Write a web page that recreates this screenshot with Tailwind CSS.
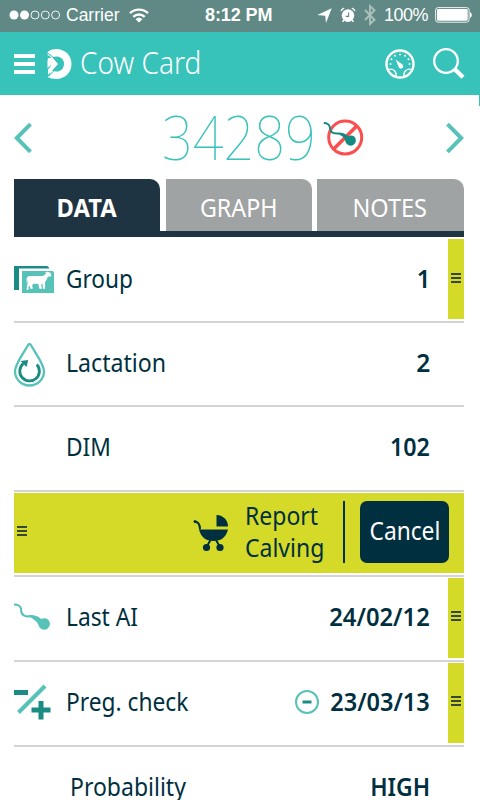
<!DOCTYPE html>
<html lang="en">
<head>
<meta charset="utf-8">
<title>Cow Card</title>
<script src="https://cdn.jsdelivr.net/npm/@tailwindcss/browser@4"></script>
</head>
<body class="w-[480px] h-[800px] overflow-hidden bg-white font-['Noto_Sans','Open_Sans',sans-serif] text-[#00303f]">
<div class="relative flex h-[800px] w-[480px] flex-col overflow-hidden">
  <!-- status bar -->
  <div class="flex h-8 shrink-0 items-center bg-[#608985] pb-[2px] font-['Liberation_Sans',Arial,sans-serif] text-white">
    <svg class="ml-[9px] h-[10px] w-[52px]" viewBox="0 0 52 10"><g fill="#fff"><circle cx="5" cy="5" r="4.5"/><circle cx="15.5" cy="5" r="4.5"/></g><g fill="none" stroke="#fff" stroke-width=".9"><circle cx="26" cy="5" r="4"/><circle cx="36.3" cy="5" r="4"/><circle cx="46.6" cy="5" r="4"/></g></svg>
    <span class="ml-[5px] w-[63px] whitespace-nowrap text-[17.5px] leading-8">Carrier</span>
    <svg class="h-[15px] w-[20px]" viewBox="0 0 20 15"><g fill="none" stroke="#fff" stroke-width="2.4"><path d="M1 5.2a13 13 0 0 1 18 0"/><path d="M4.3 8.8a8.3 8.3 0 0 1 11.4 0"/></g><path d="M6.6 11.2a5 5 0 0 1 6.8 0L10 14.6z" fill="#fff"/></svg>
    <span class="ml-[56px] w-[112px] whitespace-nowrap text-[18px] font-bold leading-8 tracking-[-0.1px]">8:12 PM</span>
    <svg class="h-[15px] w-[15px]" viewBox="0 0 15 15"><path d="M14.7.3 9 15 8.2 7.700 .3 7z" fill="#fff"/></svg>
    <svg class="ml-[8px] h-[16px] w-[16px]" viewBox="0 0 16 16"><circle cx="8" cy="8.600" r="6.300" fill="#fff"/><path d="M8.600 5.600v3.800H5.600" fill="none" stroke="#608985" stroke-width="1.100"/><path d="M1 4A5 5 0 0 1 4.200 1.200M15 4a5 5 0 0 0-3.200-2.800" fill="none" stroke="#fff" stroke-width="1.400"/><path d="m3.800 13-1.200 1.800M12.200 13l1.200 1.800" stroke="#fff" stroke-width="1.400"/></svg>
    <svg class="ml-[8px] h-[22px] w-[12px]" viewBox="0 0 12 22"><path d="M1 6l9.500 9.800L6 20V2l4.500 4.200L1 16" fill="none" stroke="#a9c0be" stroke-width="1.900"/></svg>
    <span class="ml-[8px] w-[51px] whitespace-nowrap text-[18px] leading-8 tracking-[-0.5px]">100%</span>
    <svg class="h-[16px] w-[37px]" viewBox="0 0 37 16"><rect x=".6" y=".6" width="33.5" height="14.6" rx="2.5" fill="none" stroke="#fff" stroke-width=".9"/><rect x="2" y="2" width="30.700" height="11.800" rx="1.200" fill="#fff"/><path d="M35 5v6q1.800-1 1.800-3t-1.800-3z" fill="#fff"/></svg>
  </div>
  <!-- app header -->
  <div class="flex h-[63px] shrink-0 items-center bg-[#37c2ba] text-white">
    <div class="ml-[14px] flex w-[21px] flex-col gap-[4px]"><i class="h-[4px] bg-white"></i><i class="h-[4px] bg-white"></i><i class="h-[4px] bg-white"></i></div>
    <svg class="ml-[12px] h-[30px] w-[25px]" viewBox="0 0 25 30"><path d="M9 0C18 0 24.5 6.500 24.500 15S18 30 9 30Q4 30 .5 28V3Q4 0 9 0z" fill="#fff"/><path d="M5 8.500Q9 6.800 12 7.800 17 9.800 17 15T12 22.200Q9 23.200 5 21.500L11 15z" fill="#37c2ba"/><path d="M0 3.700 8 9.500M.2 28 8.500 20.500" stroke="#37c2ba" stroke-width="1"/><path d="M0 5.500 4.500 8.500 0 11zM0 19.500 4 16 3 26.500 0 27.500z" fill="#37c2ba"/><path d="M.5 9.500 5.500 8.500 10.500 15 1 26V20.500L5.500 15z" fill="#fff"/></svg>
    <span class="ml-[8px] w-[304px] origin-left scale-x-[.92] whitespace-nowrap pb-[3px] text-[30.5px] font-light leading-[60px]">Cow Card</span>
    <svg class="ml-[1px] h-[30px] w-[30px]" viewBox="0 0 30 30"><g fill="none" stroke="#fff"><circle cx="15" cy="15" r="13.500" stroke-width="2.400"/><path d="M4 20.500a5.500 5.500 0 0 1 7 6.500M26 20.500a5.500 5.500 0 0 0-7 6.500" stroke-width="1.300"/></g><path d="M10.500 10.500 17.100 15.300A2.300 2.300 0 1 1 13.600 17.400z" fill="#fff"/><g fill="#fff"><circle cx="5.500" cy="15" r="1"/><circle cx="6.500" cy="10.200" r="1"/><circle cx="10" cy="6.700" r="1"/><circle cx="15" cy="5.400" r="1"/><circle cx="20" cy="6.700" r="1"/><circle cx="23.500" cy="10.200" r="1"/><circle cx="24.500" cy="15" r="1"/></g></svg>
    <svg class="ml-[18px] h-[31px] w-[32px]" viewBox="0 0 32 31"><circle cx="13" cy="13" r="11.800" fill="none" stroke="#fff" stroke-width="2.300"/><path d="m21 20.500 9 8.800" stroke="#fff" stroke-width="4.400"/></svg>
  </div>
  <div class="absolute left-[479px] top-[95px] h-[11px] w-px bg-[#37c2ba]"></div>
  <!-- animal number -->
  <div class="flex h-[84px] shrink-0 items-center px-[14px]">
    <svg class="mt-[2px] h-[30px] w-[18px]" viewBox="0 0 18 30"><path d="M16.500 1.200 2.800 15 16.500 28.800" fill="none" stroke="#56c2b8" stroke-width="4"/></svg>
    <span class="ml-[130px] w-[161px] origin-left scale-x-[.885] whitespace-nowrap text-[61px] font-thin leading-[84px] text-[#37c2ba]">34289</span>
    <svg class="mt-[2px] h-[38px] w-[42px]" viewBox="0 0 42 38"><g fill="none" stroke="#fb4f4f" stroke-width="3"><circle cx="22.200" cy="18.500" r="16.500"/><path d="M33.700 7 10.700 30" stroke-width="3.600"/></g><path d="M.8 4q5 0 6 4 0 6.500 7 6.500 7-.5 11 3.500" fill="none" stroke="#148a82" stroke-width="1.900"/><path d="M14 14q7-.5 10.500 3.300 4-1.500 6.500 0a5.300 5.300 0 1 1-8.500 5.500q-.5-4.500-5-6.500z" fill="#148a82"/></svg>
    <svg class="ml-[81px] mt-[2px] h-[30px] w-[18px]" viewBox="0 0 18 30"><path d="M1.500 1.200 15.200 15 1.500 28.800" fill="none" stroke="#56c2b8" stroke-width="4"/></svg>
  </div>
  <!-- tabs -->
  <div class="ml-[14px] flex h-[58px] w-[450px] shrink-0 gap-[6px] border-b-[6px] border-[#1f3442] text-[25px] leading-[57px] text-white">
    <div class="flex w-[146px] justify-center rounded-tr-[10px] bg-[#1f3442] pr-px"><span class="scale-x-[.95] font-bold">DATA</span></div>
    <div class="flex w-[146px] justify-center rounded-tr-[10px] bg-[#9fa3a3]"><span class="scale-x-[.93]">GRAPH</span></div>
    <div class="-ml-px flex w-[147px] justify-center rounded-tr-[10px] bg-[#9fa3a3] pr-px"><span class="scale-x-[.94]">NOTES</span></div>
  </div>
  <!-- rows -->
  <div class="ml-[14px] flex w-[450px] flex-col text-[25px]">
    <div class="flex h-[86px] items-center border-b-2 border-[#d3d5d5]">
      <svg class="h-[30px] w-[52px]" viewBox="0 0 52 30"><path d="M0 2h32.500q2.500 0 2.500 2.500H5V26H0z" fill="#1a8c84"/><path d="M8 7h30q2 0 2 2v20H8z" fill="#56c2b8"/><path d="M12.500 15q.5-3 3.500-3h12q2 0 4-2.600l-1-.8 2-.3.5-.8 1.500.9h1.300l1.100 3-.7 1.200h-2.400q-1.200 1.300-1.800 3.500l-1.400 2v6.600h-2.200l-.5-5.500-1.300 1.500 1 4h-2.700l-1.200-5h-4.700l-1.300 1.500.6 3.500h-2.300L15.500 21.500l-1 1.200v3h-2l1-6.500.3-4-1 4z" fill="#fff"/></svg>
      <span class="w-[200px] origin-left scale-x-[.905] whitespace-nowrap">Group</span>
      <span class="ml-auto mr-[18px] origin-right scale-x-[.95] font-semibold">1</span>
      <div class="flex h-[80px] w-[16px] flex-col items-center justify-center gap-[2px] bg-[#d5da28] pb-[3px]"><i class="h-[2px] w-[10px] bg-[#36483a]"></i><i class="h-[2px] w-[10px] bg-[#36483a]"></i><i class="h-[2px] w-[10px] bg-[#36483a]"></i></div>
    </div>
    <div class="flex h-[84px] items-center border-b-2 border-[#d3d5d5] pb-[2px]">
      <svg class="mt-[2px] h-[45px] w-[52px]" viewBox="0 0 52 45"><path d="M15.500 2Q16.500 2 17.500 4C22 12 30 22 30 29.500A14.500 14 0 0 1 1 29.500C1 22 9 12 13.500 4Q14.500 2 15.500 2z" fill="none" stroke="#56c2b8" stroke-width="2.300"/><path d="M22.800 22.500A9.800 9.800 0 1 1 9.300 21.600" fill="none" stroke="#1a8c84" stroke-width="2.800"/><path d="M6.500 19 14.200 18 12.500 25z" fill="#1a8c84"/></svg>
      <span class="w-[200px] origin-left scale-x-[.925] whitespace-nowrap">Lactation</span>
      <span class="ml-auto mr-[34px] origin-right scale-x-[.98] font-semibold">2</span>
    </div>
    <div class="flex h-[85px] items-center border-b-2 border-[#d3d5d5] pb-[3px]">
      <span class="ml-[52px] w-[200px] origin-left scale-x-[.91] whitespace-nowrap">DIM</span>
      <span class="ml-auto mr-[34px] origin-right scale-x-[.93] font-semibold">102</span>
    </div>
    <div class="flex h-[85px] items-center border-b-2 border-[#d3d5d5]">
      <div class="-mt-px flex h-[80px] w-full items-center bg-[#d5da28] pb-[3px]">
        <div class="mb-px ml-[3px] flex w-[10px] flex-col gap-[2px]"><i class="h-[2px] bg-[#36483a]"></i><i class="h-[2px] bg-[#36483a]"></i><i class="h-[2px] bg-[#36483a]"></i></div>
        <svg class="ml-[166px] mt-[2px] h-[38px] w-[36px]" viewBox="0 0 36 38"><g fill="#00303f"><path d="M23.500 1A11.500 11.500 0 0 1 35 12.500H23.500zM6 15.500H35Q32 27 20.500 27 9 27 6 15.500z"/><circle cx="13.500" cy="33.500" r="3.600"/><circle cx="27" cy="33.500" r="3.600"/></g><path d="M1 7.500q6 0 6 8M17.500 26l-4 7M23 26l4 7" fill="none" stroke="#00303f" stroke-width="2"/><circle cx="2" cy="7.600" r="1.400" fill="#00303f"/></svg>
        <span class="ml-[16px] w-[98px] origin-left scale-x-[.92] whitespace-nowrap pb-px leading-[32px]">Report<br>Calving</span>
        <div class="h-[62px] w-[2px] bg-[#00303f]"></div>
        <div class="ml-[15px] flex h-[62px] w-[89px] items-center justify-center rounded-[7px] bg-[#00303f] pb-px text-white"><span class="scale-x-[.91]">Cancel</span></div>
      </div>
    </div>
    <div class="flex h-[85px] items-center border-b-2 border-[#d3d5d5] pb-[3px]">
      <svg class="h-[30px] w-[52px]" viewBox="0 0 52 30"><path d="M0 2.500q6 0 7 4-.5 7 6 8 8-1.500 13 3" fill="none" stroke="#56c2b8" stroke-width="2"/><path d="M14 13.500q7-.5 13 3.500 4-1.500 7 .5a5.800 5.800 0 1 1-9 7q-1-5-9-9.500z" fill="#56c2b8"/></svg>
      <span class="w-[200px] origin-left scale-x-[.91] whitespace-nowrap">Last AI</span>
      <span class="ml-auto mr-[18px] origin-right scale-x-[.95] font-semibold">24/02/12</span>
      <div class="mt-px flex h-[80px] w-[16px] flex-col items-center justify-center gap-[2px] bg-[#d5da28] pb-[4px]"><i class="h-[2px] w-[10px] bg-[#36483a]"></i><i class="h-[2px] w-[10px] bg-[#36483a]"></i><i class="h-[2px] w-[10px] bg-[#36483a]"></i></div>
    </div>
    <div class="flex h-[85px] items-center border-b-2 border-[#d3d5d5] pb-[3px]">
      <svg class="h-[36px] w-[52px]" viewBox="0 0 52 36"><path d="M4.500 28.500 31 2" stroke="#56c2b8" stroke-width="4"/><path d="M0 8.500h14M17.500 26H36.500M27 17v18.500" stroke="#1a8c84" stroke-width="5"/></svg>
      <span class="w-[200px] origin-left scale-x-[.91] whitespace-nowrap">Preg. check</span>
      <svg class="ml-[28px] h-[24px] w-[25px]" viewBox="0 0 25 24"><circle cx="13" cy="12" r="11" fill="none" stroke="#56c2b8" stroke-width="2"/><path d="M8.500 12h9" stroke="#1a8c84" stroke-width="3"/></svg>
      <span class="ml-auto mr-[18px] origin-right scale-x-[.94] font-semibold">23/03/13</span>
      <div class="mt-px flex h-[80px] w-[16px] flex-col items-center justify-center gap-[2px] bg-[#d5da28] pb-[4px]"><i class="h-[2px] w-[10px] bg-[#36483a]"></i><i class="h-[2px] w-[10px] bg-[#36483a]"></i><i class="h-[2px] w-[10px] bg-[#36483a]"></i></div>
    </div>
    <div class="flex h-[79px] items-center">
      <span class="ml-[56px] w-[200px] origin-left scale-x-[.92] whitespace-nowrap">Probability</span>
      <span class="ml-auto mr-[34px] origin-right scale-x-[.92] font-semibold">HIGH</span>
    </div>
  </div>
</div>
</body>
</html>
